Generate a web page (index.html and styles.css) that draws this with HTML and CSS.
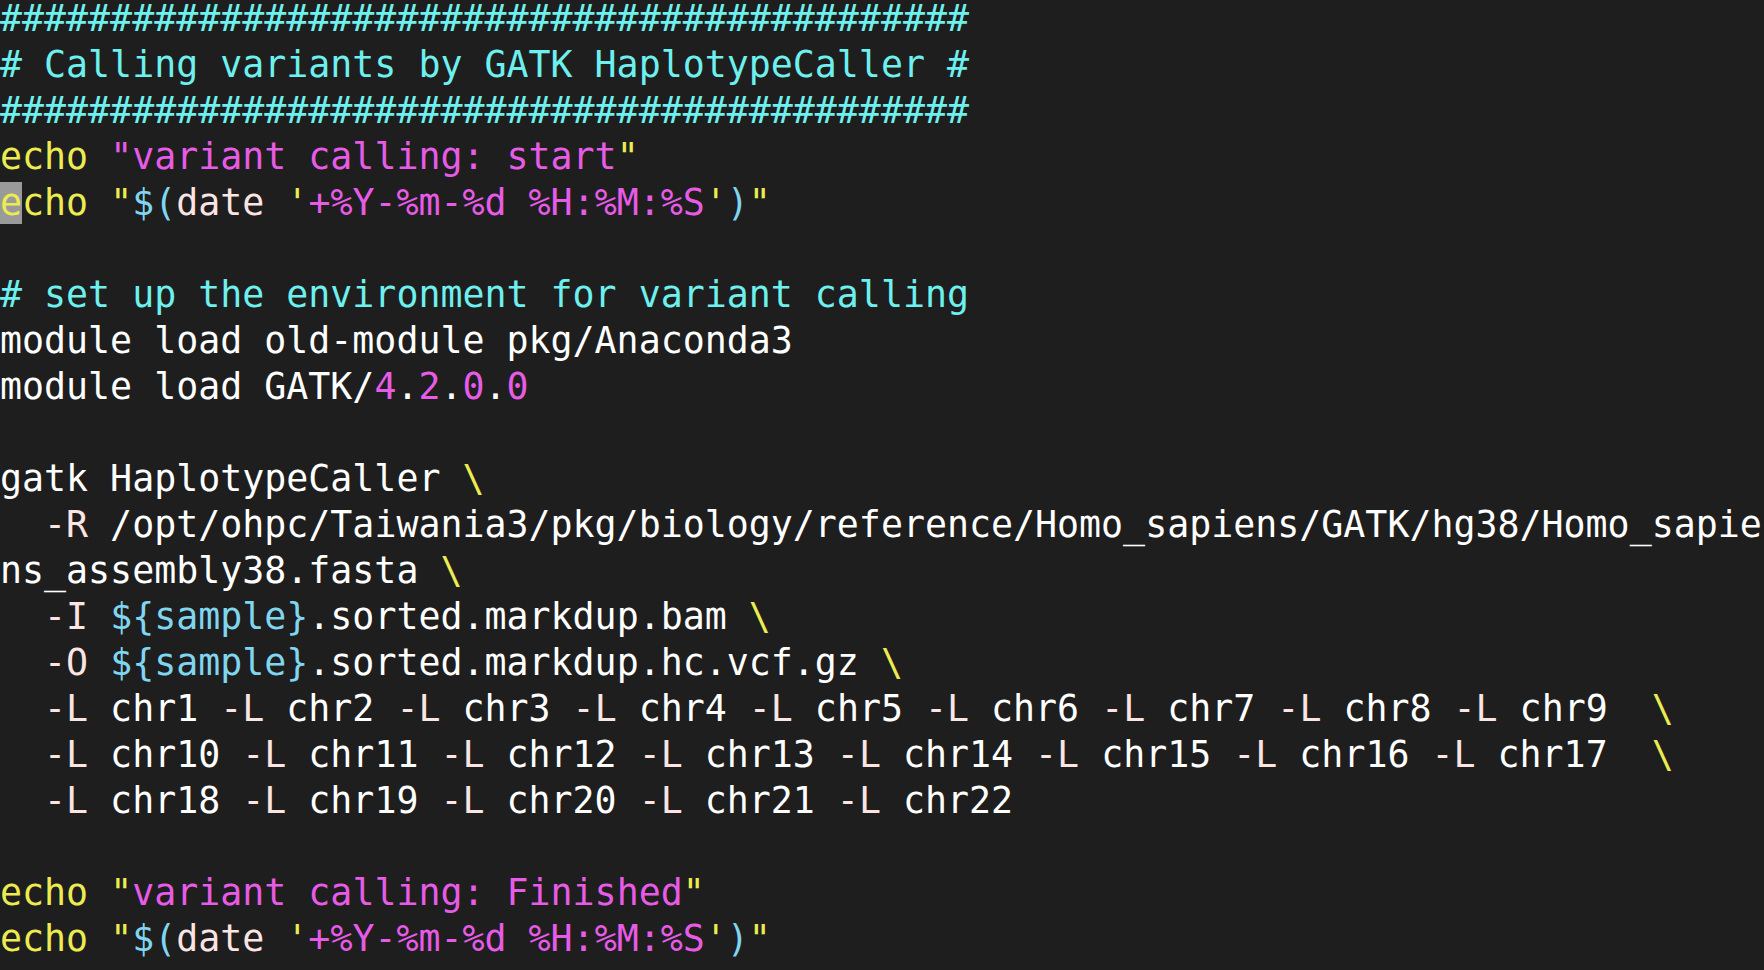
FILE: index.html
```html
<!DOCTYPE html>
<html lang="en">
<head>
  <meta charset="UTF-8">
  <title>variant calling script</title>
  <link rel="stylesheet" href="styles.css">
</head>
<body>
  <div class="term">
    <div class="ln c-cmt">############################################</div>
    <div class="ln c-cmt"># Calling variants by GATK HaplotypeCaller #</div>
    <div class="ln c-cmt">############################################</div>
    <div class="ln"><span class="c-kw">echo</span> <span class="c-str">"variant calling: start</span><span class="c-kw">"</span></div>
    <div class="ln"><span class="c-kw"><span class="cursor">e</span>cho</span> <span class="c-kw">"</span><span class="c-var">$(</span><span class="c-arg">date</span> <span class="c-kw">'</span><span class="c-str">+%Y-%m-%d %H:%M:%S</span><span class="c-kw">'</span><span class="c-var">)</span><span class="c-kw">"</span></div>
    <div class="ln"> </div>
    <div class="ln c-cmt"># set up the environment for variant calling</div>
    <div class="ln">module load old-module pkg/Anaconda3</div>
    <div class="ln">module load GATK/<span class="c-str">4</span>.<span class="c-str">2</span>.<span class="c-str">0</span>.<span class="c-str">0</span></div>
    <div class="ln"> </div>
    <div class="ln">gatk HaplotypeCaller <span class="c-kw">\</span></div>
    <div class="ln">  <span class="c-arg">-R</span> /opt/ohpc/Taiwania3/pkg/biology/reference/Homo_sapiens/GATK/hg38/Homo_sapie</div>
    <div class="ln">ns_assembly38.fasta <span class="c-kw">\</span></div>
    <div class="ln">  <span class="c-arg">-I</span> <span class="c-var">${sample}</span>.sorted.markdup.bam <span class="c-kw">\</span></div>
    <div class="ln">  <span class="c-arg">-O</span> <span class="c-var">${sample}</span>.sorted.markdup.hc.vcf.gz <span class="c-kw">\</span></div>
    <div class="ln">  <span class="c-arg">-L</span> chr1 <span class="c-arg">-L</span> chr2 <span class="c-arg">-L</span> chr3 <span class="c-arg">-L</span> chr4 <span class="c-arg">-L</span> chr5 <span class="c-arg">-L</span> chr6 <span class="c-arg">-L</span> chr7 <span class="c-arg">-L</span> chr8 <span class="c-arg">-L</span> chr9  <span class="c-kw">\</span></div>
    <div class="ln">  <span class="c-arg">-L</span> chr10 <span class="c-arg">-L</span> chr11 <span class="c-arg">-L</span> chr12 <span class="c-arg">-L</span> chr13 <span class="c-arg">-L</span> chr14 <span class="c-arg">-L</span> chr15 <span class="c-arg">-L</span> chr16 <span class="c-arg">-L</span> chr17  <span class="c-kw">\</span></div>
    <div class="ln">  <span class="c-arg">-L</span> chr18 <span class="c-arg">-L</span> chr19 <span class="c-arg">-L</span> chr20 <span class="c-arg">-L</span> chr21 <span class="c-arg">-L</span> chr22</div>
    <div class="ln"> </div>
    <div class="ln"><span class="c-kw">echo</span> <span class="c-kw">"</span><span class="c-str">variant calling: Finished</span><span class="c-kw">"</span></div>
    <div class="ln"><span class="c-kw">echo</span> <span class="c-kw">"</span><span class="c-var">$(</span><span class="c-arg">date</span> <span class="c-kw">'</span><span class="c-str">+%Y-%m-%d %H:%M:%S</span><span class="c-kw">'</span><span class="c-var">)</span><span class="c-kw">"</span></div>
  </div>
</body>
</html>
```

FILE: styles.css
```css
/* terminal look */
html, body {
  margin: 0;
  padding: 0;
  background: #1e1e1e;
}

body {
  height: 970px;
  overflow: hidden;
}

.term {
  font-family: "DejaVu Sans Mono", "Liberation Mono", monospace;
  font-size: 36.6px;
  line-height: 46px;
  color: #ffffff;
  margin-top: -4px;
}

.ln {
  white-space: pre;
  height: 46px;
}

.c-cmt { color: #6df0ee; }
.c-kw  { color: #ecec52; }
.c-str { color: #e65ce6; }
.c-var { color: #80d6f0; }
.c-arg { color: #fbe4e2; }

.cursor {
  display: inline-block;
  height: 42px;
  vertical-align: top;
  margin-top: 2px;
  line-height: 42px;
  background: #9a9a9a;
}
```
